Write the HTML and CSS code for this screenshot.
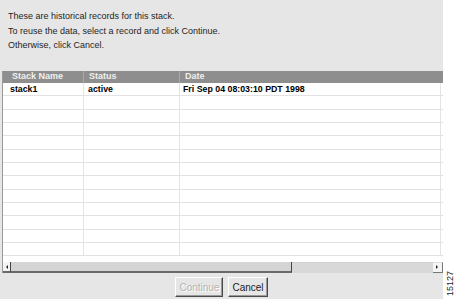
FILE: index.html
```html
<!DOCTYPE html>
<html lang="en">
<head>
    <meta charset="UTF-8">
    <title>Stack History</title>
    <link rel="stylesheet" href="styles.css">
</head>
<body>
    <div class="page">
        <div class="dialog">
            <div class="intro">
                <p>These are historical records for this stack.</p>
                <p>To reuse the data, select a record and click Continue.</p>
                <p>Otherwise, click Cancel.</p>
            </div>
            <div class="grid">
                <div class="row head">
                    <div class="cell">Stack Name</div>
                    <div class="cell">Status</div>
                    <div class="cell">Date</div>
                </div>
                <div class="row">
                    <div class="cell">stack1</div>
                    <div class="cell">active</div>
                    <div class="cell">Fri Sep 04 08:03:10 PDT 1998</div>
                </div>
                <div class="row"><div class="cell"></div><div class="cell"></div><div class="cell"></div></div>
                <div class="row"><div class="cell"></div><div class="cell"></div><div class="cell"></div></div>
                <div class="row"><div class="cell"></div><div class="cell"></div><div class="cell"></div></div>
                <div class="row"><div class="cell"></div><div class="cell"></div><div class="cell"></div></div>
                <div class="row"><div class="cell"></div><div class="cell"></div><div class="cell"></div></div>
                <div class="row"><div class="cell"></div><div class="cell"></div><div class="cell"></div></div>
                <div class="row"><div class="cell"></div><div class="cell"></div><div class="cell"></div></div>
                <div class="row"><div class="cell"></div><div class="cell"></div><div class="cell"></div></div>
                <div class="row"><div class="cell"></div><div class="cell"></div><div class="cell"></div></div>
                <div class="row"><div class="cell"></div><div class="cell"></div><div class="cell"></div></div>
                <div class="row"><div class="cell"></div><div class="cell"></div><div class="cell"></div></div>
                <div class="row"><div class="cell"></div><div class="cell"></div><div class="cell"></div></div>

                <div class="hscroll">
                    <span class="arrow left"></span>
                    <span class="thumb"></span>
                    <span class="track"></span>
                    <span class="arrow right"></span>
                </div>
            </div>
            <div class="buttons">
                <button class="btn" disabled>Continue</button>
                <button class="btn">Cancel</button>
            </div>
        </div>
        <div class="figno"><span>15127</span></div>
    </div>
</body>
</html>
```

FILE: styles.css
```css
body{
    margin: 0;
    background: #fff;
    font-family: "Liberation Sans", Arial, sans-serif;
}
p{
    margin: 0;
}
.page{
    display: flex;
    height: 299px;
}
.dialog{
    width: 443px;
    background-color: #e6e6e6;
    display: flex;
    flex-direction: column;
}
.intro{
    height: 71px;
    box-sizing: border-box;
    padding: 9px 0 0 8px;
    font-size: 9px;
    line-height: 14.5px;
    color: #1e1e1e;
}
.grid{
    margin-left: 2px;
    width: 441px;
    height: 202px;
    box-sizing: border-box;
    background-color: #fff;
    border-left: 1px solid #9a9a9a;
    display: flex;
    flex-direction: column;
}
.row{
    display: grid;
    grid-template-columns: 81px 96px 261px;
    height: 13.33px;
    box-sizing: border-box;
    border-bottom: 1px solid #e2e2e2;
    font-size: 8.8px;
    font-weight: bold;
    line-height: 12px;
    color: #000;
}
.row .cell{
    border-right: 1px solid #e4e4e4;
    white-space: nowrap;
    overflow: hidden;
}
.row .cell:nth-child(1){ padding-left: 7px; }
.row .cell:nth-child(2){ padding-left: 4px; }
.row .cell:nth-child(3){ padding-left: 3px; }
.row.head{
    grid-template-columns: 81px 96px 263px;
    height: 12px;
    border-bottom: none;
    background-color: #8e8e8e;
    color: #f0f0f0;
    font-size: 9px;
    line-height: 11px;
}
.row.head .cell{
    border-right: 1px solid #a8a8a8;
}
.row.head .cell:nth-child(1){ padding-left: 9px; }
.row.head .cell:nth-child(2){ padding-left: 5px; }
.row.head .cell:nth-child(3){ padding-left: 5px; border-right: none; }

.hscroll{
    margin-top: auto;
    height: 11px;
    display: flex;
}
.hscroll span{
    display: block;
    box-sizing: border-box;
    height: 11px;
}
.arrow{
    width: 8px;
    background-color: #f4f4f4;
    position: relative;
}
.arrow.left{
    width: 7px;
    border-bottom: 2px solid #6a6a6a;
}
.arrow.right{
    width: 10px;
    border-right: 1px solid #777;
    border-bottom: 1px solid #777;
    border-top: 1px solid #ddd;
}
.arrow::after{
    content: "";
    position: absolute;
    top: 3px;
    left: 3px;
    border-top: 2px solid transparent;
    border-bottom: 2px solid transparent;
}
.arrow.left::after{
    border-right: 2px solid #222;
}
.arrow.right::after{
    top: 2px;
    border-left: 2px solid #222;
}
.thumb{
    width: 282px;
    background-color: #d4d4d4;
    border-left: 1px solid #444;
    border-right: 1px solid #444;
    border-bottom: 2px solid #6a6a6a;
}
.track{
    flex: 1;
    background-color: #d8d8d8;
    border-top: 1px solid #cfcfcf;
}

.buttons{
    flex: 1;
    display: flex;
    justify-content: center;
    align-items: center;
    gap: 5px;
    padding-top: 2px;
}
.btn{
    height: 20px;
    padding: 0 3px;
    font-family: "Liberation Sans", Arial, sans-serif;
    font-size: 10px;
    color: #222;
    background-color: #e6e6e6;
    border: 1px solid;
    border-color: #fff #4a4a4a #4a4a4a #fff;
    box-shadow: inset -1px -1px 0 #9a9a9a;
}
.btn:disabled{
    color: #b2b2b2;
    text-shadow: 1px 1px 0 #fff;
}
.figno{
    flex: 1;
    display: flex;
    align-items: flex-end;
    justify-content: center;
    padding-bottom: 3px;
}
.figno span{
    writing-mode: vertical-rl;
    transform: rotate(180deg);
    font-size: 9px;
    color: #222;
}
```
